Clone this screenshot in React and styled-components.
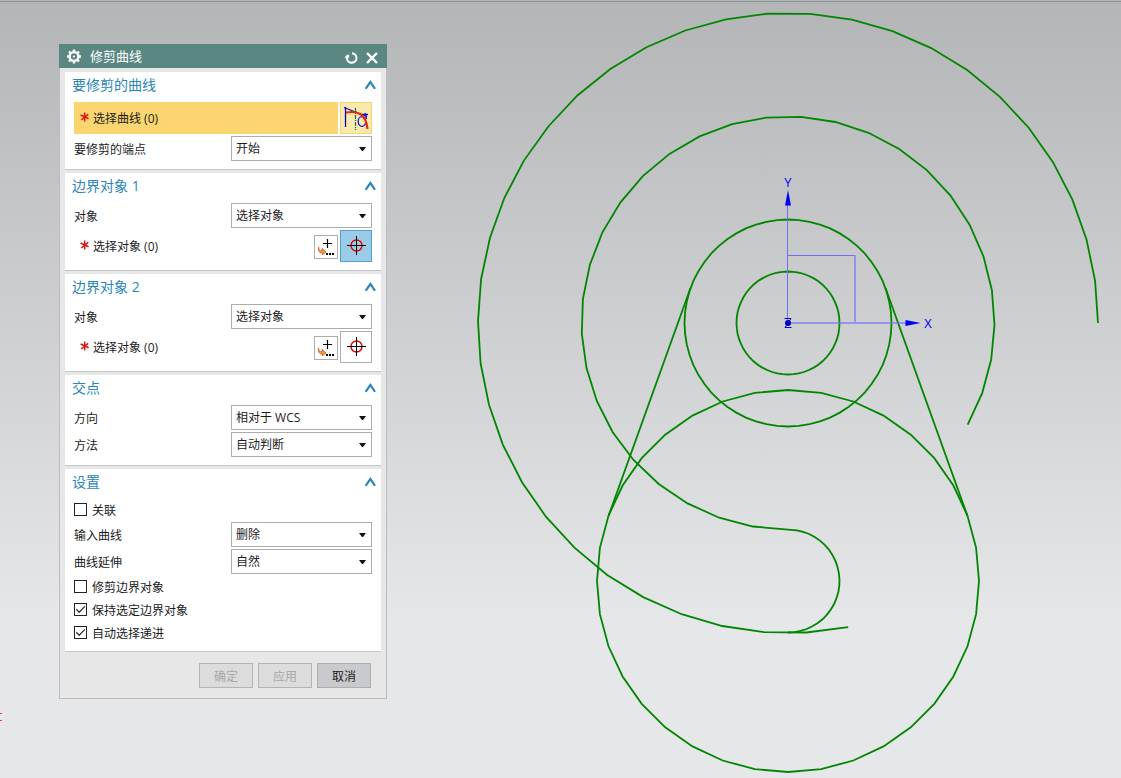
import React, { useState } from 'react'
import styled, { createGlobalStyle, css } from 'styled-components'

const colors = {
	titleBar: '#5b8782',
	heading: '#2a86b8',
	panel: '#e7e7e7',
	border: '#adadad',
	curve: '#008600',
	axis: '#0000f5',
	axisLight: '#6f6ffa',
}

const GlobalStyle = createGlobalStyle`
	* {
		box-sizing: border-box;
	}
	body {
		margin: 0;
		font-family: "Open Sans", "Noto Sans CJK SC", sans-serif;
		font-size: 12px;
		color: #1c1c1c;
	}
	button, select, input {
		font: inherit;
		color: inherit;
		margin: 0;
	}
`

// vertices of an arc, angles in degrees, counter-clockwise from +X
const arcPoints = (cx, cy, r, from, to, segments) => {
	const points = []
	for (let i = 0; i <= segments; i++) {
		const angle = (from + ((to - from) * i) / segments) * Math.PI / 180
		points.push(`${(cx + r * Math.cos(angle)).toFixed(1)},${(cy - r * Math.sin(angle)).toFixed(1)}`)
	}
	return points.join(' ')
}

const curves = [
	arcPoints(788, 323, 51.5, 0, 360, 60),
	arcPoints(788, 323, 103.5, 0, 360, 60),
	arcPoints(788, 323, 206.5, -29.5, 260.2, 30) + ' ' + arcPoints(788, 581, 51.5, 80, -90, 24),
	arcPoints(788, 323, 310, 0, 281.2, 36),
	arcPoints(788, 581, 191, 0, 360, 36),
	'690.5,288 608.5,516',
	'885.5,288 967.5,516',
]

const Drawing = () => (
	<Canvas viewBox="0 0 1121 778" preserveAspectRatio="xMinYMin meet">
		<line x1="0" y1="1.5" x2="1121" y2="1.5" stroke="#8b9192" />
		<g fill="none" stroke={colors.curve} strokeWidth="1.8">
			{curves.map(points => <polyline key={points} points={points} />)}
		</g>
		<g fill="none" stroke={colors.axisLight}>
			<path d="M787.5 323V205M788 255.5H855" />
			<path d="M788 323H906M855 255V323" strokeWidth="2" strokeOpacity="0.6" />
		</g>
		<g fill={colors.axis}>
			<path d="M788 190L791 205.5H785Z" />
			<path d="M920.5 323L905.5 320V326Z" />
			<circle cx="788" cy="323" r="3" fill="#0000b0" />
		</g>
		<g fill="none" stroke={colors.axis}>
			<path d="M784.5 318.5H791L785 327.5H791.5" />
		</g>
		<g fill={colors.axis} fontFamily="Open Sans, sans-serif" fontSize="13" textAnchor="middle">
			<text x="788" y="187">Y</text>
			<text x="928" y="328">X</text>
		</g>
		<path d="M0 713.5H2M0 720.5H2" stroke="#e04040" />
	</Canvas>
)

const GearIcon = () => (
	<svg width="16" height="16" viewBox="0 0 16 16">
		<circle cx="8" cy="8.5" r="4.4" fill="none" stroke="#fff" strokeWidth="2.4" />
		<circle cx="8" cy="8.5" r="1.1" fill="#fff" />
		<path d="M8 1.5V4M8 13V15.5M1 8.5H3M13 8.5H15M3 3.5L4.6 5.1M11.4 11.9L13 13.5M13 3.5L11.4 5.1M4.6 11.9L3 13.5" stroke="#fff" strokeWidth="2.4" />
	</svg>
)

const ResetIcon = () => (
	<svg width="14" height="14" viewBox="0 0 14 14" fill="none" stroke="#fff">
		<path d="M8 2.2A4.8 4.8 0 1 1 3 6" strokeWidth="2" />
		<path d="M0.4 6.7L3 3.8H5.2V6.7Z" fill="#fff" stroke="none" />
	</svg>
)

const CloseIcon = () => (
	<svg width="12" height="12" viewBox="0 0 12 12">
		<path d="M1 1L11 11M11 1L1 11" stroke="#fff" strokeWidth="2.4" />
	</svg>
)

const ChevronIcon = () => (
	<svg width="12" height="9" viewBox="0 0 12 9">
		<path d="M1.6 8.8L6.4 2L11 8.8" fill="none" stroke={colors.heading} strokeWidth="2.2" />
	</svg>
)

const CurveIcon = () => (
	<svg width="30" height="30" viewBox="0 0 30 30" fill="none">
		<path d="M4.5 4V24" stroke="#0000b8" strokeWidth="1.3" />
		<path d="M3 4.5L26 13.5M21 11.5H27M24 10L25.5 16" stroke="#1010d0" strokeWidth="1.3" />
		<path d="M14.5 5V27" stroke="#187048" strokeWidth="1.2" strokeDasharray="4 1 1 1" />
		<ellipse cx="21" cy="18.5" rx="3.8" ry="4.8" stroke="#1010d0" strokeWidth="1.3" />
		<path d="M5 9.5C17 7.5 25 11 26.5 26" stroke="#ee2a0c" strokeWidth="2.2" />
	</svg>
)

const PointListIcon = () => (
	<svg width="22" height="22" viewBox="0 0 22 22" fill="none">
		<path d="M8 7.5H17M12.5 3V12" stroke="#000" strokeWidth="1.2" />
		<path d="M3.6 11.2C3.5 14 5 15 7 14.8V12.4L11 16L7.4 18.8V17C4.4 17.4 2.8 14.6 3.6 11.2Z" fill="#f5a32a" stroke="#cc4a28" strokeWidth="0.8" />
		<path d="M11 18H13M14 18H16M17 18H19" stroke="#000" strokeWidth="2" />
	</svg>
)

const TargetIcon = () => (
	<svg width="30" height="30" viewBox="0 0 30 30" fill="none">
		<circle cx="15.5" cy="14.5" r="5.5" stroke="#e00000" strokeWidth="1.4" />
		<path d="M6 14.5H25M15.5 5V24" stroke="#000" />
	</svg>
)

const RequiredIcon = () => (
	<svg width="9" height="12" viewBox="0 0 9 12">
		<path d="M4.7 0.5V9.5M0.6 3L8.6 6.8M8.2 2.4L1.2 8" stroke="#dc1414" strokeWidth="1.5" />
	</svg>
)

const Section = ({ title, children }) => {
	const [open, setOpen] = useState(true)
	return (
		<SectionBox>
			<SectionHeader type="button" aria-expanded={open} onClick={() => setOpen(!open)}>
				{title}
				<ChevronIcon />
			</SectionHeader>
			{open && <Rows>{children}</Rows>}
		</SectionBox>
	)
}

const SelectField = ({ id, label, options }) => (
	<Row>
		<label htmlFor={id}>{label}</label>
		<SelectWrap>
			<Select id={id}>
				{options.map(option => <option key={option}>{option}</option>)}
			</Select>
			<Arrow width="7" height="4" viewBox="0 0 7 4"><path d="M0 0H7L4 4H3Z" fill="#111" /></Arrow>
		</SelectWrap>
	</Row>
)

const CheckField = ({ label, checked = false }) => (
	<CheckLabel>
		<CheckWrap>
			<CheckBox type="checkbox" defaultChecked={checked} />
			<CheckMark width="13" height="13" viewBox="0 0 13 13">
				<path d="M2.3 6.3L5.2 9.2L10.8 3.4" fill="none" stroke="#333" strokeWidth="1.3" />
			</CheckMark>
		</CheckWrap>
		{label}
	</CheckLabel>
)

const BoundaryObject = ({ number, active }) => (
	<Section title={`边界对象 ${number}`}>
		<SelectField id={`object-${number}`} label="对象" options={['选择对象']} />
		<PickRow>
			<PickLabel><RequiredIcon />选择对象 (0)</PickLabel>
			<IconButton type="button" $small><PointListIcon /></IconButton>
			<IconButton type="button" $active={active}><TargetIcon /></IconButton>
		</PickRow>
	</Section>
)

const App = () => (
	<Workspace>
		<GlobalStyle />
		<Drawing />
		<Dialog role="dialog" aria-labelledby="dialog-title">
			<TitleBar>
				<GearIcon />
				<Title id="dialog-title">修剪曲线</Title>
				<TitleButton type="button"><ResetIcon /></TitleButton>
				<TitleButton type="button"><CloseIcon /></TitleButton>
			</TitleBar>
			<Body>
				<Section title="要修剪的曲线">
					<PickRow>
						<PickLabel $highlight><RequiredIcon />选择曲线 (0)</PickLabel>
						<IconButton type="button" $highlight><CurveIcon /></IconButton>
					</PickRow>
					<SelectField id="end-point" label="要修剪的端点" options={['开始']} />
				</Section>
				<BoundaryObject number={1} active />
				<BoundaryObject number={2} />
				<Section title="交点">
					<SelectField id="direction" label="方向" options={['相对于 WCS']} />
					<SelectField id="method" label="方法" options={['自动判断']} />
				</Section>
				<Section title="设置">
					<CheckField label="关联" />
					<SelectField id="input-curve" label="输入曲线" options={['删除']} />
					<SelectField id="extension" label="曲线延伸" options={['自然']} />
					<CheckField label="修剪边界对象" />
					<CheckField label="保持选定边界对象" checked />
					<CheckField label="自动选择递进" checked />
				</Section>
			</Body>
			<Footer>
				<Button type="button" disabled>确定</Button>
				<Button type="button" disabled>应用</Button>
				<Button type="button">取消</Button>
			</Footer>
		</Dialog>
	</Workspace>
)

const Workspace = styled.main`
	position: relative;
	min-height: 100vh;
	background: linear-gradient(#b4b5b7, #e6e7e9 80%);
`
const Canvas = styled.svg`
	display: block;
	width: 100%;
	height: 100vh;
`
const Dialog = styled.section`
	position: absolute;
	top: 44px;
	left: 59px;
	width: 328px;
	background: ${colors.panel};
	border: 1px solid #bcbcc0;
	border-top: none;
`
const TitleBar = styled.header`
	display: flex;
	align-items: center;
	gap: 8px;
	height: 24px;
	margin: 0 -1px;
	padding: 0 9px 0 7px;
	background: ${colors.titleBar};
	color: #fff;
`
const Title = styled.h1`
	flex: 1;
	margin: 0;
	font-size: 13px;
	font-weight: 400;
	line-height: 24px;
`
const TitleButton = styled.button`
	display: flex;
	padding: 3px 0 0;
	border: none;
	background: none;
`
const Body = styled.div`
	display: flex;
	flex-direction: column;
	gap: 3px;
	padding: 4px 5px 0;
`
const SectionBox = styled.section`
	background: #fff;
	border-bottom: 1px solid #c6c6c6;
`
const SectionHeader = styled.button`
	display: flex;
	justify-content: space-between;
	align-items: center;
	width: 100%;
	height: 24px;
	margin-bottom: 6px;
	padding: 0 5px 0 7px;
	border: none;
	background: none;

	&& {
		font-size: 14px;
		color: ${colors.heading};
	}
`
const Rows = styled.div`
	display: flex;
	flex-direction: column;
	gap: 2px;
	padding: 0 9px 8px;
`
const Row = styled.div`
	display: flex;
	justify-content: space-between;
	align-items: center;
`
const PickRow = styled.div`
	display: flex;
	align-items: flex-end;
	gap: 2px;
`
const PickLabel = styled.div`
	flex: 1;
	display: flex;
	align-items: center;
	gap: 4px;
	height: 32px;
	padding: 0 0 1px 6px;
	background: ${props => props.$highlight ? '#fbd670' : 'none'};
`
const IconButton = styled.button`
	display: flex;
	justify-content: center;
	align-items: center;
	width: ${props => props.$small ? '24px' : '32px'};
	height: ${props => props.$small ? '24px' : '32px'};
	margin-bottom: ${props => props.$small ? '3px' : '0'};
	padding: 0;
	border: 1px solid ${colors.border};
	background: #fff;

	${props => props.$active && css`
		border-color: #4ba3d3;
		background: #9bcbe6;
	`}
	${props => props.$highlight && css`
		border-color: #f8d56c;
		background: #f9e9ae;
	`}
`
const SelectWrap = styled.div`
	display: grid;
	align-items: center;
	width: 141px;

	> * {
		grid-area: 1 / 1;
	}
`
const Select = styled.select`
	appearance: none;
	width: 100%;
	height: 25px;
	padding: 0 20px 0 4px;
	border: 1px solid ${colors.border};
	border-radius: 0;
	background: #fff;
`
const Arrow = styled.svg`
	justify-self: end;
	margin-right: 6px;
	pointer-events: none;
`
const CheckLabel = styled.label`
	display: flex;
	align-items: center;
	gap: 5px;
	height: 21px;
`
const CheckWrap = styled.span`
	display: grid;

	> * {
		grid-area: 1 / 1;
	}
`
const CheckMark = styled.svg`
	visibility: hidden;
	pointer-events: none;
`
const CheckBox = styled.input`
	appearance: none;
	width: 13px;
	height: 13px;
	border: 1px solid #222;
	background: #fff;

	&:checked + ${CheckMark} {
		visibility: visible;
	}
`
const Footer = styled.footer`
	display: flex;
	justify-content: flex-end;
	gap: 5px;
	padding: 11px 15px 10px;
`
const Button = styled.button`
	width: 54px;
	height: 25px;
	padding: 0;
	border: 1px solid ${colors.border};
	background: #c9cace;

	&:disabled {
		border-color: #b4b4b4;
		background: #dcdcdc;
		color: #a8a8a8;
	}
`

export default App
